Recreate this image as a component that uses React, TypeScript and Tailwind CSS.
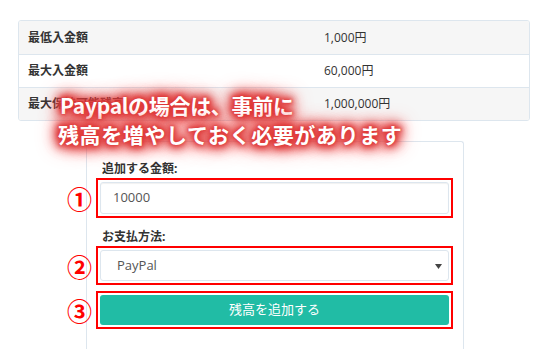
import React from "react";

const font = "font-['Open_Sans','Noto_Sans_CJK_JP',sans-serif]";

function Row({ label, value, striped }: { label: string; value: string; striped?: boolean }) {
  return (
    <div className={`grid grid-cols-[297px_1fr] h-[33px] items-center border-t border-[#dde6ee] first:border-t-0 ${striped ? "bg-[#f6f6f6]" : "bg-white"}`}>
      <div className="pl-[9px] text-[12px] font-bold text-[#333]">{label}</div>
      <div className="pl-[8px] text-[12px] text-[#333]">{value}</div>
    </div>
  );
}

function Mark({ n }: { n: string }) {
  return (
    <span className="absolute left-[-31px] top-1/2 -translate-y-1/2 text-[25px] leading-none font-bold text-[#f00] font-['Noto_Sans_CJK_JP',sans-serif]">
      {n}
    </span>
  );
}

export default function App() {
  const glow =
    "[text-shadow:0_0_2px_#df3a3a,0_0_4px_#df3a3a,0_0_6px_#df3a3a,0_0_8px_#df3a3a,0_0_10px_#e04040,0_0_12px_#e04040,0_0_14px_#e34a4a,0_0_16px_#e34a4a,0_0_19px_#e65858,0_0_22px_#ea6a6a]";
  return (
    <div className={`relative w-[550px] h-[349px] overflow-hidden bg-white ${font}`}>
      <div className="pt-[20px] pl-[18px]">
        <div className="w-[512px] border border-[#dde6ee] rounded-[3px] overflow-hidden">
          <Row label="最低入金額" value="1,000円" striped />
          <Row label="最大入金額" value="60,000円" />
          <Row label="最大保持可能残高" value="1,000,000円" striped />
        </div>
      </div>

      <div className="ml-[86px] mt-[20px] w-[378px] h-[209px] border border-b-0 border-[#dde6ee] rounded-t-[3px] pt-[19px] pl-[9px]">
        <div className="pl-[6px] text-[12px] leading-[16px] font-bold text-[#333]">追加する金額:</div>
        <div className="relative mt-[1px] w-[357px] border-2 border-[#f00] p-[2px]">
          <Mark n="①" />
          <div className="h-[32px] border border-[#dde6ee] rounded-[3px] flex items-center pl-[12px] text-[13px] text-[#555] shadow-[inset_0_1px_1px_rgba(0,0,0,0.06)]">
            10000
          </div>
        </div>
        <div className="mt-[11px] pl-[6px] text-[12px] leading-[16px] font-bold text-[#333]">お支払方法:</div>
        <div className="relative mt-[1px] w-[357px] border-2 border-[#f00] p-[2px]">
          <Mark n="②" />
          <div className="h-[31px] border border-[#dde6ee] rounded-[3px] flex items-center justify-between pl-[16px] pr-[6px] text-[13px] text-[#555]">
            <span>PayPal</span>
            <svg width="7" height="5" viewBox="0 0 7 5" className="mt-[1px]">
              <path d="M0 0 H7 L3.5 5 Z" fill="#444" />
            </svg>
          </div>
        </div>
        <div className="relative mt-[6px] w-[357px] border-2 border-[#f00] p-[2px]">
          <Mark n="③" />
          <div className="h-[30px] rounded-[3px] bg-[#21bca5] flex items-center justify-center text-[13px] text-white">
            残高を追加する
          </div>
        </div>
      </div>

      <div className={`absolute left-[60px] top-[91px] text-white font-bold text-[21px] leading-[29px] font-['Noto_Sans_CJK_JP',sans-serif] ${glow}`}>
        <div className="tracking-[-0.3px]">Paypalの場合は、事前に</div>
        <div className="-ml-[2px] tracking-[0.6px]">残高を増やしておく必要があります</div>
      </div>
    </div>
  );
}
